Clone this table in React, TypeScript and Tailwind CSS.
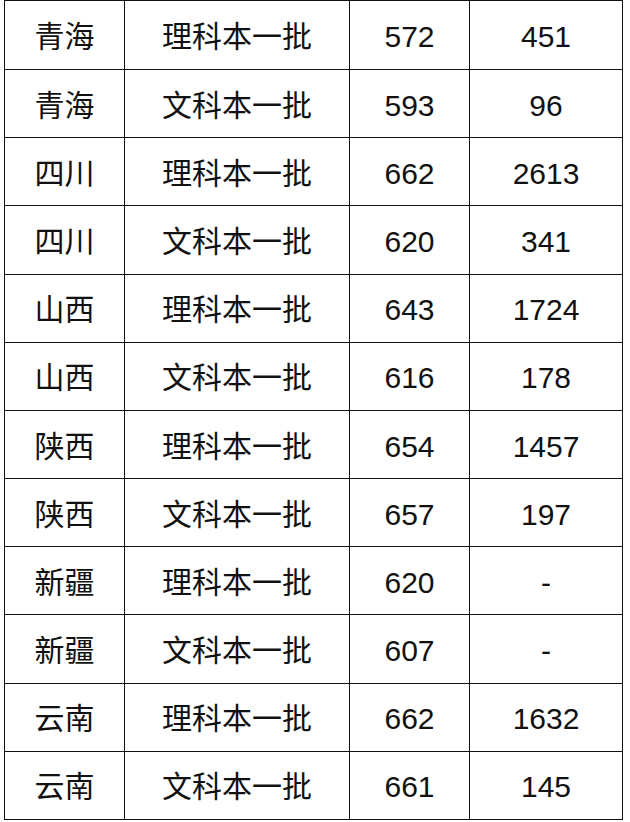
import React from "react";

const rows: [string, string, string, string][] = [
  ["青海", "理科本一批", "572", "451"],
  ["青海", "文科本一批", "593", "96"],
  ["四川", "理科本一批", "662", "2613"],
  ["四川", "文科本一批", "620", "341"],
  ["山西", "理科本一批", "643", "1724"],
  ["山西", "文科本一批", "616", "178"],
  ["陕西", "理科本一批", "654", "1457"],
  ["陕西", "文科本一批", "657", "197"],
  ["新疆", "理科本一批", "620", "-"],
  ["新疆", "文科本一批", "607", "-"],
  ["云南", "理科本一批", "662", "1632"],
  ["云南", "文科本一批", "661", "145"],
];

export default function App() {
  return (
    <div className="w-[630px] h-[822px] bg-white">
      <div
        className="ml-[4px] w-[619px] h-[820px] border-[1.5px] border-[#111] grid grid-rows-12 text-[30px] text-[#111]"
        style={{ fontFamily: '"Liberation Sans", "Noto Sans CJK SC", sans-serif' }}
      >
        {rows.map((r, i) => (
          <div
            key={i}
            className={`grid grid-cols-[119px_225px_120px_1fr] ${i === 0 ? "" : "border-t-[1.5px] border-[#111]"}`}
          >
            {r.map((c, j) => (
              <div
                key={j}
                className={`flex items-center justify-center pt-[4px] leading-none ${j > 0 ? "border-l-[1.5px] border-[#111]" : ""}`}
              >
                {c}
              </div>
            ))}
          </div>
        ))}
      </div>
    </div>
  );
}
